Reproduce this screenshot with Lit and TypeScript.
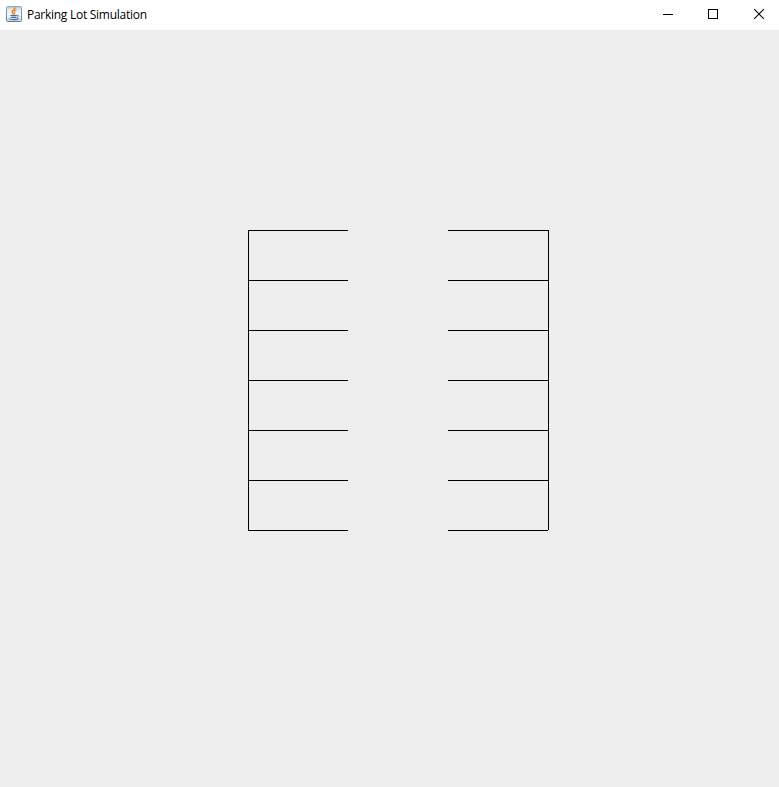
import { LitElement, html, css, svg } from "lit";
import { customElement, property } from "lit/decorators.js";

@customElement("title-bar")
class TitleBar extends LitElement {
  @property() label = "";

  static styles = css`
    :host {
      display: flex;
      align-items: center;
      height: 30px;
      flex: none;
      background: #fff;
      color: #000;
    }
    .icon {
      display: block;
      flex: none;
      margin: -2px 5px 0 6px;
    }
    .label {
      flex: 1;
      padding-bottom: 1px;
      font: 12px/17px "Segoe UI", "Noto Sans", "Open Sans", sans-serif;
      font-family: "Segoe UI", "Open Sans", "Noto Sans", sans-serif;
      letter-spacing: -0.27px;
      white-space: nowrap;
    }
    .controls {
      display: block;
      flex: none;
    }
  `;

  render() {
    return html`
      <svg class="icon" width="16" height="16" viewBox="0 0 16 16">
        <defs>
          <linearGradient id="face" x1="0" y1="0" x2="0" y2="1">
            <stop offset="0" stop-color="#a9c0d4" />
            <stop offset="0.2" stop-color="#e3e9ee" />
            <stop offset="0.55" stop-color="#f7f8f9" />
            <stop offset="1" stop-color="#c9d5df" />
          </linearGradient>
          <linearGradient id="edge" x1="0" y1="0" x2="0" y2="1">
            <stop offset="0" stop-color="#8aa9c5" />
            <stop offset="1" stop-color="#5f7a92" />
          </linearGradient>
        </defs>
        <rect x="0.5" y="0.5" width="15" height="15" rx="1.2" fill="url(#face)" stroke="url(#edge)" />
        <g fill="none" stroke-linecap="round">
          <path d="M8.8 2C9.4 3.8 5.7 4.3 6.1 6.1C6.3 6.9 7.1 7.2 7.3 8" stroke="#ee7a16" stroke-width="1.5" />
          <path d="M10.1 4.2C8.6 4.8 7.9 5.6 8.5 6.4C8.9 7 8.8 7.5 8.4 8" stroke="#ee8a35" stroke-width="1.3" />
          <path d="M4.8 9.5H10.3M5.4 11.4H9.9" stroke="#33689b" stroke-width="1.1" />
          <path d="M11.2 9C13.1 8.9 12.9 10.5 11.2 11.2" stroke="#3d6f9e" stroke-width="1" />
          <path d="M3.4 12.9C4.5 13.8 10.7 13.8 12.3 12.8" stroke="#41749f" stroke-width="1.2" />
        </g>
      </svg>
      <span class="label">${this.label}</span>
      <svg class="controls" width="134" height="30" viewBox="0 0 134 30" shape-rendering="crispEdges">
        <rect x="18" y="14" width="10" height="1" />
        <rect x="63.5" y="9.5" width="9" height="9" fill="none" stroke="#000" />
        <path
          d="M109.15 9.15L118.85 18.85M118.85 9.15L109.15 18.85"
          stroke="#000"
          stroke-width="1.05"
          shape-rendering="auto"
        />
      </svg>
    `;
  }
}

@customElement("parking-lot")
class ParkingLot extends LitElement {
  @property({ type: Number }) rows = 6;

  static styles = css`
    :host {
      display: block;
      padding: 200px 0 0 248px;
    }
    .lot {
      display: block;
    }
  `;

  render() {
    const spaceWidth = 100;
    const spaceHeight = 50;
    const height = this.rows * spaceHeight;
    const dividers = Array.from({ length: this.rows + 1 }, (_, i) => i * spaceHeight);
    return html`
      <svg class="lot" width="301" height="301" shape-rendering="crispEdges">
        <rect x="0" y="0" width="1" height=${height + 1} />
        <rect x=${spaceWidth * 3} y="0" width="1" height=${height} />
        ${dividers.map(
          (y) => svg`
            <rect x="0" y=${y} width=${spaceWidth} height="1" />
            <rect x=${spaceWidth * 2} y=${y} width=${spaceWidth} height="1" />
          `
        )}
      </svg>
    `;
  }
}

@customElement("app-root")
class AppRoot extends LitElement {
  static styles = css`
    :host {
      display: flex;
      flex-direction: column;
      height: 100vh;
      overflow: hidden;
      background: #eee;
    }
  `;

  render() {
    return html`
      <title-bar label="Parking Lot Simulation"></title-bar>
      <parking-lot .rows=${6}></parking-lot>
    `;
  }
}
